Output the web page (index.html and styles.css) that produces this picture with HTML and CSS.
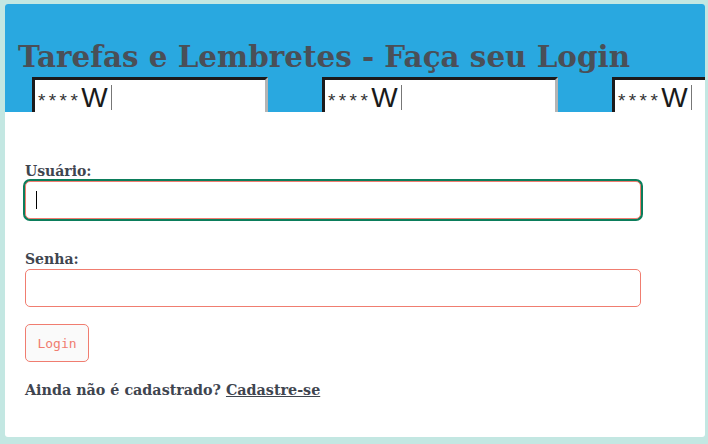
FILE: index.html
```html
<!DOCTYPE html>
<html lang="pt-BR">
<head>
<meta charset="utf-8">
<title>Tarefas e Lembretes - Faça seu Login</title>
<link rel="stylesheet" href="styles.css">
</head>
<body>
<div class="card">
  <header class="header">
    <h1 class="title">Tarefas e Lembretes - Faça seu Login</h1>
    <div class="tiles" aria-hidden="true">
      <div class="tile"><span class="stars">****</span>W<span class="tcaret"></span></div>
      <div class="tile"><span class="stars">****</span>W<span class="tcaret"></span></div>
      <div class="tile"><span class="stars">****</span>W<span class="tcaret"></span></div>
    </div>
  </header>
  <form class="form">
    <label class="label" for="usuario">Usuário:</label>
    <div class="field-wrap">
      <input class="field is-focused" id="usuario" type="text">
      <span class="caret" aria-hidden="true"></span>
    </div>
    <label class="label" for="senha">Senha:</label>
    <input class="field" id="senha" type="password">
    <button class="btn" type="button">Login</button>
    <p class="signup">Ainda não é cadastrado? <a class="link" href="#">Cadastre-se</a></p>
  </form>
</div>
</body>
</html>
```

FILE: styles.css
```css
html, body {
  margin: 0;
  padding: 0;
}
body {
  background: #c3e7e2;
  width: 708px;
  height: 444px;
  overflow: hidden;
  padding-top: 4px;
  box-sizing: border-box;
}
.card {
  margin-left: 5px;
  width: 700px;
  height: 433px;
  background: #ffffff;
  border-radius: 3px;
  overflow: hidden;
}
.header {
  background: #29a8e0;
  height: 108px;
  overflow: hidden;
  display: flex;
  flex-direction: column;
}
.title {
  margin: 0;
  padding: 33px 0 0 13px;
  font-family: "DejaVu Serif", serif;
  font-weight: bold;
  font-size: 29.4px;
  line-height: 40px;
  height: 40px;
  color: #4a4f57;
  white-space: nowrap;
}
.tiles {
  display: flex;
  gap: 54px;
  padding-left: 27px;
}
.tile {
  flex: 0 0 236px;
  height: 60px;
  box-sizing: border-box;
  background: #ffffff;
  border-top: 3px solid #1c1a1b;
  border-left: 3px solid #1c1a1b;
  border-right: 3px solid #b4b4b4;
  padding: 3px 0 0 3px;
  font-family: "Liberation Sans", sans-serif;
  font-size: 28px;
  line-height: 30px;
  color: #1a1a1a;
  display: flex;
  align-items: baseline;
}
.stars {
  font-size: 19px;
  letter-spacing: 3.4px;
  color: #333;
}
.tcaret {
  display: inline-block;
  width: 1px;
  height: 25px;
  background: #777;
  margin-left: 3px;
  align-self: flex-start;
  margin-top: 2px;
}
.form {
  padding: 50px 0 0 20px;
  display: flex;
  flex-direction: column;
  align-items: flex-start;
  font-family: "DejaVu Serif", serif;
  color: #3f454f;
}
.label {
  font-size: 14px;
  font-weight: bold;
  line-height: 18px;
  margin-bottom: 1px;
}
.field-wrap {
  position: relative;
  margin-bottom: 31px;
}
.caret {
  position: absolute;
  left: 11px;
  top: 10px;
  width: 1px;
  height: 18px;
  background: #000;
}
.field {
  display: block;
  box-sizing: border-box;
  width: 616px;
  height: 38px;
  border: 1px solid #f07d70;
  border-radius: 5px;
  padding: 0 10px;
  font-size: 16px;
  background: #ffffff;
  outline: none;
  margin: 0;
}
.field.is-focused {
  box-shadow: 0 0 0 2px #0b7d5b;
}
#senha {
  margin-bottom: 17px;
}
.btn {
  box-sizing: border-box;
  width: 64px;
  height: 38px;
  background: #fafafa;
  border: 1px solid #f07d70;
  border-radius: 5px;
  color: #f07d70;
  font-family: "DejaVu Sans Mono", monospace;
  font-size: 13px;
  padding: 0;
  margin: 0;
}
.signup {
  margin: 19px 0 0 0;
  font-size: 14.3px;
  font-weight: bold;
  line-height: 18px;
}
.link {
  color: #3f454f;
  text-decoration: underline;
}
```
